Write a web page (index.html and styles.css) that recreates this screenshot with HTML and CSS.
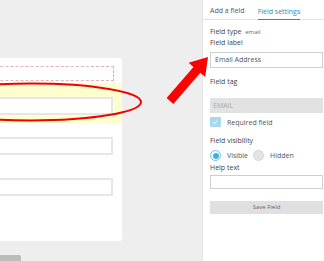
FILE: index.html
```html
<!DOCTYPE html>
<html>
<head>
<meta charset="utf-8">
<link rel="stylesheet" href="styles.css">
</head>
<body>
<div class="page">
  <div class="canvas">
    <div class="card">
      <div class="dropzone"></div>
      <div class="highlight">
        <div class="field-input"></div>
      </div>
      <div class="row"><div class="field-input"></div></div>
      <div class="row"><div class="field-input"></div></div>
    </div>
    <div class="submit-stub"></div>
  </div>
  <aside class="sidebar">
    <div class="tabs">
      <span class="tab">Add a field</span>
      <span class="tab active">Field settings</span>
    </div>
    <div class="settings">
      <div class="line type">Field type <span class="type-val">email</span></div>
      <div class="line">Field label</div>
      <div class="input">Email Address</div>
      <div class="line tag-label">Field tag</div>
      <div class="input disabled">EMAIL</div>
      <div class="check-row">
        <span class="checkbox"><svg viewBox="0 0 10 10" width="10" height="10"><path d="M3 5.2 L4.4 6.6 L7.2 3.6" fill="none" stroke="#fff" stroke-width="1"/></svg></span>
        <span>Required field</span>
      </div>
      <div class="line vis-label">Field visibility</div>
      <div class="radio-row">
        <span class="radio on"></span><span class="radio-text">Visible</span>
        <span class="radio"></span><span class="radio-text">Hidden</span>
      </div>
      <div class="line help-label">Help text</div>
      <div class="input help"></div>
      <div class="save">Save Field</div>
    </div>
  </aside>
  <svg class="annot" width="324" height="261" viewBox="0 0 324 261">
    <ellipse cx="31" cy="102" rx="110" ry="18.5" fill="none" stroke="#f20000" stroke-width="2"/>
    <polygon points="208,57 205.2,77.1 200.3,72.8 173.4,103.9 166.6,98.1 193.5,67 188.6,62.7" fill="#ff0000"/>
  </svg>
</div>
</body>
</html>
```

FILE: styles.css
```css
* { box-sizing: border-box; }
html, body { margin: 0; padding: 0; }
body {
  font-family: "Open Sans", "Liberation Sans", sans-serif;
  background: #eeeeee;
  width: 324px;
  height: 261px;
  overflow: hidden;
}
.page {
  position: relative;
  display: flex;
  width: 324px;
  height: 261px;
  overflow: hidden;
}
.canvas {
  width: 202px;
  flex: none;
  display: flex;
  flex-direction: column;
}
.card {
  flex: none;
  margin-top: 58px;
  margin-left: -80px;
  width: 202px;
  height: 183px;
  background: #fff;
  border-radius: 3px;
  padding-top: 8px;
}
.dropzone {
  margin-right: 8px;
  height: 15px;
  border: 1px dashed #e2b4b4;
}
.highlight {
  margin-top: 2px;
  height: 40px;
  background: #fefecf;
  padding-top: 14px;
  padding-right: 9px;
}
.field-input {
  height: 18px;
  background: #fff;
  border: 2px solid #e6e6e6;
}
.row {
  padding-right: 9px;
  margin-top: 14px;
}
.row + .row { margin-top: 23px; }
.submit-stub {
  flex: none;
  margin-top: 14px;
  margin-left: -10px;
  width: 31px;
  height: 12px;
  background: #bcbcbc;
  border-radius: 2px;
}
.sidebar {
  width: 122px;
  flex: none;
  background: #fff;
  border-left: 1px solid #e4e4e4;
  padding-left: 7px;
  color: #555;
  font-size: 7px;
}
.tabs {
  display: flex;
  gap: 13px;
  height: 20px;
  align-items: flex-end;
  border-bottom: 1px solid #e3e3e3;
  margin-left: -7px;
  padding-left: 7px;
}
.tab {
  line-height: 9px;
  padding-bottom: 4px;
  color: #555;
}
.tab.active {
  color: #3a86b0;
  border-bottom: 1px solid #3a86b0;
  margin-bottom: -1px;
  padding-bottom: 3px;
}
.settings {
  padding-right: 1px;
  display: flex;
  flex-direction: column;
}
.line {
  line-height: 10px;
  color: #444;
}
.type { margin-top: 7px; }
.type-val { font-size: 6px; color: #666; margin-left: 2px; }
.line + .line { margin-top: 1px; }
.input {
  margin-top: 4px;
  height: 16px;
  border: 1px solid #cfcfcf;
  padding-left: 4px;
  line-height: 14px;
  color: #555;
}
.tag-label { margin-top: 9px; }
.input.disabled {
  margin-top: 11px;
  height: 15px;
  border: none;
  background: #e2e2e2;
  color: #a8a8a8;
  line-height: 15px;
  padding-left: 3px;
}
.check-row {
  margin-top: 4px;
  display: flex;
  align-items: center;
  height: 10px;
  gap: 6px;
  color: #555;
}
.checkbox {
  width: 11px;
  height: 10px;
  background: #a9d8ec;
  border-radius: 1px;
  display: flex;
}
.vis-label { margin-top: 9px; }
.radio-row {
  margin-top: 4px;
  display: flex;
  align-items: center;
  height: 11px;
}
.radio {
  width: 11px;
  height: 11px;
  border-radius: 50%;
  background: #e4e4e4;
  border: 1px solid #d6d6d6;
  flex: none;
  position: relative;
}
.radio.on {
  background: #fff;
  border: 1px solid #6cc4e6;
}
.radio.on::after {
  content: "";
  position: absolute;
  left: 1.5px;
  top: 1.5px;
  width: 6px;
  height: 6px;
  border-radius: 50%;
  background: #3fb2e0;
}
.radio-text { margin-left: 6px; margin-right: 5px; }
.help-label { margin-top: 2px; }
.input.help { margin-top: 2px; height: 14px; }
.save {
  margin-top: 12px;
  height: 13px;
  background: #e0e0e0;
  color: #666;
  font-size: 6px;
  text-align: center;
  line-height: 13px;
}
.annot {
  position: absolute;
  left: 0;
  top: 0;
  pointer-events: none;
}
```
